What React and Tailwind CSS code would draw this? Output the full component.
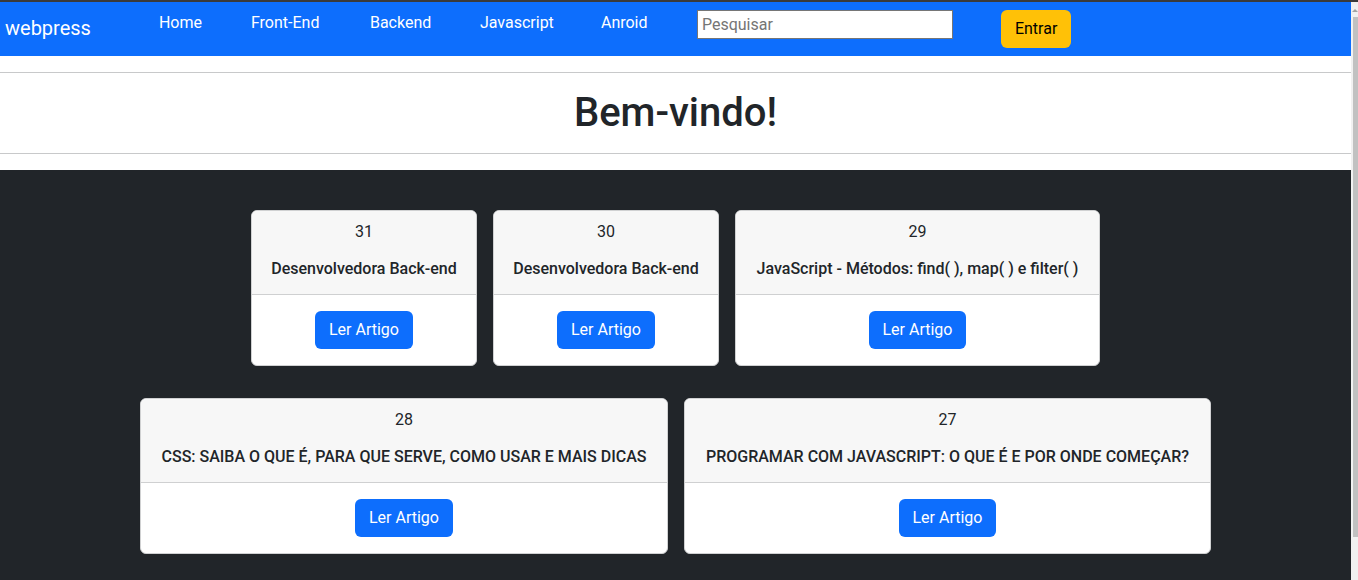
import React from 'react';

const links = [
  { label: 'Home', w: 'w-[92px]' },
  { label: 'Front-End', w: 'w-[119px]' },
  { label: 'Backend', w: 'w-[110px]' },
  { label: 'Javascript', w: 'w-[121px]' },
  { label: 'Anroid', w: 'w-[120px]' },
];

const rows = [
  [
    { id: 31, title: 'Desenvolvedora Back-end', w: 'w-[226px]' },
    { id: 30, title: 'Desenvolvedora Back-end', w: 'w-[226px]' },
    { id: 29, title: 'JavaScript - Métodos: find( ), map( ) e filter( )', w: 'w-[365px]' },
  ],
  [
    { id: 28, title: 'CSS: SAIBA O QUE É, PARA QUE SERVE, COMO USAR E MAIS DICAS', w: 'w-[528px]' },
    { id: 27, title: 'PROGRAMAR COM JAVASCRIPT: O QUE É E POR ONDE COMEÇAR?', w: 'w-[527px]' },
  ],
];

const ArticleCard = ({ id, title, w }) => (
  <div className={`${w} bg-white border border-[#d0d1d2] rounded-md overflow-hidden text-center text-[#212529]`}>
    <div className="bg-[#f7f7f7] border-b border-[#cfd0d1] px-2 pt-[9px] pb-[13px]">
      <p className="text-base leading-6">{id}</p>
      <h6 className="mt-[13px] text-base leading-6 font-medium whitespace-nowrap">{title}</h6>
    </div>
    <div className="py-4 flex justify-center">
      <button className="h-[38px] px-[14px] rounded-md bg-[#0d6efd] text-white text-base">Ler Artigo</button>
    </div>
  </div>
);

const App = () => {
  return (
    <div className="h-[580px] overflow-hidden flex flex-col bg-white" style={{ fontFamily: 'Roboto, "Noto Sans", sans-serif' }}>
      <div className="h-[2px] bg-[#3a3a3a] shrink-0"></div>
      <div className="flex flex-1 min-h-0">
        <main className="flex-1 min-w-0">
          {/* navbar */}
          <nav className="h-[54px] bg-[#0d6efd] flex items-start text-white">
            <a className="pl-[5px] pt-[11px] text-[20px] leading-[30px]">webpress</a>
            <ul className="flex ml-[44px]">
              {links.map((l) => (
                <li key={l.label} className={`${l.w} pl-6 pt-[9px] text-base leading-6 text-white`}>{l.label}</li>
              ))}
            </ul>
            <input
              placeholder="Pesquisar"
              className="mt-2 w-[256px] h-[29px] bg-white border border-[#767676] px-1 text-base text-black placeholder:text-[#757575]"
            />
            <button className="ml-[48px] mt-2 h-[38px] px-[14px] rounded-md bg-[#ffc107] text-black text-base">Entrar</button>
          </nav>

          <hr className="mt-4 border-t border-[#c8c9ca]" />
          <h1 className="py-4 text-center text-[40px] leading-[48px] font-medium text-[#212529]">Bem-vindo!</h1>
          <hr className="mb-4 border-t border-[#c8c9ca]" />

          <section className="bg-[#212529] pt-10 pb-10 flex flex-col gap-8">
            {rows.map((row, i) => (
              <div key={i} className="flex justify-center gap-4">
                {row.map((c) => (
                  <ArticleCard key={c.id} {...c} />
                ))}
              </div>
            ))}
          </section>
        </main>

        {/* window scrollbar */}
        <div className="w-[7px] shrink-0 bg-[#f1f1f1] relative">
          <div className="absolute left-[1px] top-[7px] w-0 h-0 border-l-[3px] border-r-[3px] border-b-[3px] border-l-transparent border-r-transparent border-b-[#a3a3a3]"></div>
          <div className="absolute left-[2px] right-0 top-[15px] h-[520px] bg-[#c1c1c1]"></div>
        </div>
      </div>
    </div>
  );
};

export default App;
